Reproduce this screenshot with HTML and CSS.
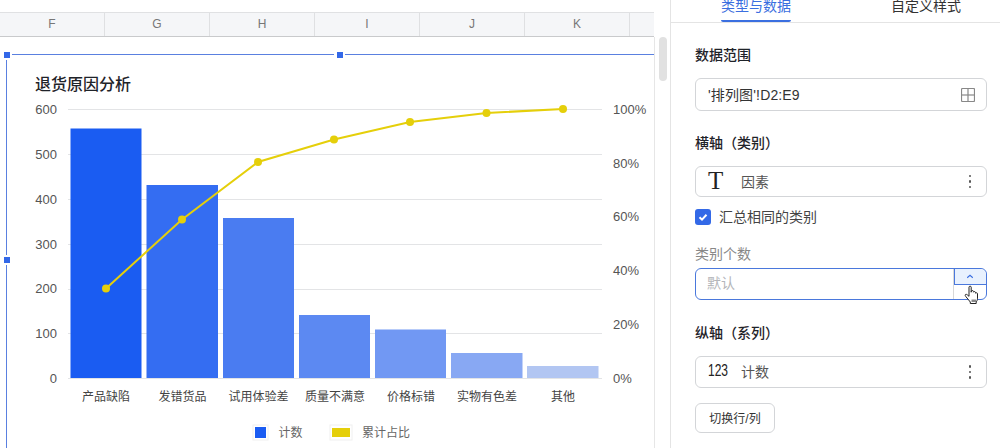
FILE: index.html
```html
<!DOCTYPE html>
<html lang="zh-CN">
<head>
    <meta charset="UTF-8">
    <title>退货原因分析</title>
    <link rel="stylesheet" href="styles.css">
</head>
<body>
<div class="app">
    <div class="sheet">
        <div class="top-strip"></div>
        <div class="col-row">
            <div class="col-cell">F</div>
            <div class="col-cell">G</div>
            <div class="col-cell">H</div>
            <div class="col-cell">I</div>
            <div class="col-cell">J</div>
            <div class="col-cell">K</div>
            <div class="col-cell col-rest"></div>
        </div>
        <div class="sheet-main">
            <!-- viewBox starts at y=37 so chart numbers read as page coordinates -->
            <svg class="chart" viewBox="0 37 654 411" width="654" height="411">
                <g class="grid">
                    <line x1="68" y1="109.5" x2="602" y2="109.5"/>
                    <line x1="68" y1="154.5" x2="602" y2="154.5"/>
                    <line x1="68" y1="199.5" x2="602" y2="199.5"/>
                    <line x1="68" y1="244.5" x2="602" y2="244.5"/>
                    <line x1="68" y1="289.5" x2="602" y2="289.5"/>
                    <line x1="68" y1="333.5" x2="602" y2="333.5"/>
                    <line x1="68" y1="378.5" x2="602" y2="378.5"/>
                </g>
                <text class="chart-title" x="35" y="90">退货原因分析</text>
                <g class="axis-left">
                    <text x="57" y="114">600</text>
                    <text x="57" y="159">500</text>
                    <text x="57" y="204">400</text>
                    <text x="57" y="249">300</text>
                    <text x="57" y="293">200</text>
                    <text x="57" y="338">100</text>
                    <text x="57" y="383">0</text>
                </g>
                <g class="axis-right">
                    <text x="613" y="114">100%</text>
                    <text x="613" y="168">80%</text>
                    <text x="613" y="221">60%</text>
                    <text x="613" y="275">40%</text>
                    <text x="613" y="329">20%</text>
                    <text x="613" y="383">0%</text>
                </g>
                <rect x="70.5" y="128.5" width="71" height="249.5" fill="#1a5cf2"/>
                <rect x="146.5" y="185" width="71.5" height="193" fill="#346df2"/>
                <rect x="223" y="218" width="71" height="160" fill="#4a7cf1"/>
                <rect x="299" y="315" width="71" height="63" fill="#5c89f2"/>
                <rect x="375" y="329.5" width="71" height="48.5" fill="#7198f3"/>
                <rect x="451" y="353" width="71.5" height="25" fill="#88a8f3"/>
                <rect x="527" y="366" width="71.5" height="12" fill="#b2c6f2"/>
                <polyline class="line" points="106,288.5 182,219.5 258,162 334,139.5 410,122 486.5,113 563,109"/>
                <g class="dots">
                    <circle cx="106" cy="288.5" r="4"/>
                    <circle cx="182" cy="219.5" r="4"/>
                    <circle cx="258" cy="162" r="4"/>
                    <circle cx="334" cy="139.5" r="4"/>
                    <circle cx="410" cy="122" r="4"/>
                    <circle cx="486.5" cy="113" r="4"/>
                    <circle cx="563" cy="109" r="4"/>
                </g>
                <g class="axis-bottom">
                    <text x="106" y="400.5">产品缺陷</text>
                    <text x="182.5" y="400.5">发错货品</text>
                    <text x="258.5" y="400.5">试用体验差</text>
                    <text x="335" y="400.5">质量不满意</text>
                    <text x="411" y="400.5">价格标错</text>
                    <text x="487" y="400.5">实物有色差</text>
                    <text x="563" y="400.5">其他</text>
                </g>
                <rect class="swatch-edge" x="253" y="425" width="15" height="15"/>
                <rect x="255" y="427" width="11" height="11" fill="#1a5cf2"/>
                <text class="legend" x="278.5" y="436.5">计数</text>
                <rect class="swatch-edge" x="330" y="425" width="22" height="15"/>
                <rect x="332" y="428" width="18" height="9" fill="#e5cf0a"/>
                <text class="legend" x="362" y="436.5">累计占比</text>
                <g class="frame">
                    <line x1="12" y1="54.5" x2="334" y2="54.5"/>
                    <line x1="345" y1="54.5" x2="654" y2="54.5"/>
                    <line x1="6.5" y1="60" x2="6.5" y2="255"/>
                    <line x1="6.5" y1="265" x2="6.5" y2="448"/>
                </g>
                <g class="handles">
                    <rect x="4" y="52" width="6" height="6"/>
                    <rect x="337" y="52" width="6" height="6"/>
                    <rect x="4" y="257" width="6" height="6"/>
                </g>
            </svg>
            <div class="scroll-track"><div class="scroll-thumb"></div></div>
        </div>
    </div>
    <div class="sidebar">
        <div class="tabs">
            <div class="tab selected">类型与数据</div>
            <div class="tab">自定义样式</div>
        </div>
        <div class="panel">
            <div class="heading">数据范围</div>
            <div class="field field-range">
                <span class="field-text">'排列图'!D2:E9</span>
                <svg class="grid-icon" viewBox="0 0 14 14" width="14" height="14">
                    <rect x="0.5" y="0.5" width="13" height="13" rx="1"/>
                    <line x1="0.5" y1="7" x2="13.5" y2="7"/>
                    <line x1="7" y1="0.5" x2="7" y2="13.5"/>
                </svg>
            </div>
            <div class="heading">横轴（类别）</div>
            <div class="field field-category">
                <span class="type-icon type-t">T</span>
                <span class="field-name">因素</span>
                <span class="more"><i></i><i></i><i></i></span>
            </div>
            <div class="check-row">
                <span class="checkbox">
                    <svg viewBox="0 0 16 16" width="16" height="16"><path d="M4.500 8.200 7 10.600 11.500 5.800"/></svg>
                </span>
                <span class="check-text">汇总相同的类别</span>
            </div>
            <div class="sub-label">类别个数</div>
            <div class="number-input">
                <span class="placeholder">默认</span>
                <div class="stepper">
                    <div class="step step-up">
                        <svg viewBox="0 0 10 6" width="8" height="5"><path d="M1.500 4.500 5 1.500 8.500 4.500"/></svg>
                    </div>
                    <div class="step"></div>
                </div>
                <svg class="cursor" viewBox="0 0 16 20" width="16" height="20">
                    <path d="M5 2.200c0-1.400 2.200-1.400 2.200 0v5l.2-1c.3-1.100 2-.9 2 .3l.1.7c.3-1 2-.8 2 .4l.1.6c.4-.8 1.900-.6 1.900.6v4.400c0 1.800-.6 2.800-1.300 3.800v1.500H6.300v-1.500L2.200 12c-.9-1-1.300-1.800-.8-2.400.6-.6 1.500-.2 2.200.5L5 11.300z"/>
                    <path class="cursor-mark" d="M7.500 14.500h4.500v2.500H7.500z"/>
                </svg>
            </div>
            <div class="heading heading-series">纵轴（系列）</div>
            <div class="field">
                <span class="type-icon"><span class="type-num">123</span></span>
                <span class="field-name">计数</span>
                <span class="more"><i></i><i></i><i></i></span>
            </div>
            <button class="switch-btn">切换行/列</button>
        </div>
    </div>
</div>
</body>
</html>
```

FILE: styles.css
```css
*{
    margin: 0;
    padding: 0;
    box-sizing: border-box;
}
body{
    font-family: "Liberation Sans", "Noto Sans CJK SC", sans-serif;
    background-color: #fff;
    overflow: hidden;
}
.app{
    display: flex;
    width: 1000px;
    height: 448px;
    overflow: hidden;
}
.sheet{
    width: 670px;
    display: flex;
    flex-direction: column;
}
.top-strip{
    height: 12px;
}
.col-row{
    width: 654px;
    height: 25px;
    display: flex;
    background-color: #f5f6f8;
    border-top: 1px solid #e0e1e3;
    border-bottom: 1px solid #c9cacc;
}
.col-cell{
    width: 105px;
    line-height: 23px;
    text-align: center;
    font-size: 12px;
    color: #777;
    border-right: 1px solid #dfe0e2;
}
.col-rest{
    width: 24px;
    border-right: none;
}
.sheet-main{
    flex: 1;
    display: flex;
}
.chart{
    display: block;
    flex: none;
    font-size: 13px;
}
.grid line{
    stroke: #e3e4e6;
    stroke-width: 1;
}
.chart-title{
    font-size: 16px;
    font-weight: 500;
    fill: #1f2329;
}
.axis-left text{
    text-anchor: end;
    fill: #555;
}
.axis-right text{
    fill: #555;
}
.axis-bottom text{
    font-size: 12px;
    text-anchor: middle;
    fill: #444;
}
.legend{
    font-size: 12px;
    fill: #666;
}
.swatch-edge{
    fill: #fff;
    stroke: #f0f0f0;
    stroke-width: 1;
}
.line{
    fill: none;
    stroke: #e5cf0a;
    stroke-width: 2;
}
.dots circle{
    fill: #e5cf0a;
}
.frame line{
    stroke: #5a80e0;
    stroke-width: 1;
}
.handles rect{
    fill: #3368e8;
}
.scroll-track{
    flex: 1;
    border-left: 1px solid #e6e6e6;
    padding: 0 3px 0 4px;
}
.scroll-thumb{
    width: 8px;
    height: 44px;
    background-color: #e1e1e1;
    border-radius: 4px;
}
.sidebar{
    width: 330px;
    border-left: 1px solid #e4e4e4;
}
.tabs{
    height: 23px;
    display: flex;
    border-bottom: 1px solid #e4e4e4;
    font-size: 14px;
    color: #333;
}
.tab{
    height: 22px;
    line-height: 12px;
    margin-left: 50px;
    width: 70px;
    text-align: center;
    white-space: nowrap;
}
.tab + .tab{
    margin-left: 100px;
}
.tab.selected{
    color: #3b6fe0;
    border-bottom: 2px solid #3b6fe0;
    border-radius: 0 0 2px 2px;
}
.panel{
    padding: 0 13px 0 24px;
    font-size: 14px;
    color: #2b2f36;
}
.heading{
    margin-top: 22px;
    margin-bottom: 13px;
    line-height: 20px;
    font-weight: 500;
    color: #1f2329;
}
.heading-series{
    margin-top: 23px;
}
.field{
    height: 32px;
    display: flex;
    align-items: center;
    padding: 0 14px 2px 12px;
    border: 1px solid #d3d5d8;
    border-radius: 6px;
    background-color: #fff;
}
.field-range{
    height: 33px;
    justify-content: space-between;
    padding-right: 11px;
}
.field-category{
    height: 31px;
}
.field-text{
    color: #333;
    letter-spacing: 0.15px;
}
.grid-icon{
    margin-top: 2px;
}
.grid-icon rect,
.grid-icon line{
    fill: none;
    stroke: #888;
    stroke-width: 1.200;
}
.type-icon{
    width: 33px;
    color: #222;
}
.type-t{
    font-family: "Liberation Serif", serif;
    font-size: 25px;
    line-height: 1;
}
.type-num{
    display: inline-block;
    font-size: 16px;
    transform: scaleX(0.75);
    transform-origin: left center;
}
.field-name{
    flex: 1;
    color: #555;
}
.more{
    display: flex;
    flex-direction: column;
    gap: 3px;
    margin-top: 2px;
    margin-right: 1px;
}
.more i{
    display: block;
    width: 2.500px;
    height: 2.500px;
    border-radius: 50%;
    background-color: #555;
}
.check-row{
    margin-top: 12px;
    display: flex;
    align-items: center;
    gap: 8px;
    height: 16px;
    color: #444;
}
.check-text{
    padding-bottom: 2px;
}
.checkbox{
    width: 16px;
    height: 16px;
    background-color: #3369e7;
    border-radius: 3px;
}
.checkbox svg{
    display: block;
}
.checkbox path{
    fill: none;
    stroke: #fff;
    stroke-width: 2;
}
.sub-label{
    margin-top: 19px;
    margin-bottom: 4px;
    line-height: 20px;
    color: #888;
}
.number-input{
    position: relative;
    height: 32px;
    display: flex;
    justify-content: space-between;
    border: 1px solid #4a78dc;
    border-radius: 6px;
    padding-left: 11px;
}
.placeholder{
    line-height: 29px;
    color: #b4b6ba;
}
.stepper{
    width: 33px;
    display: flex;
    flex-direction: column;
    border-left: 1px solid #d8d8d8;
    border-radius: 0 6px 6px 0;
    overflow: hidden;
}
.step{
    flex: 1;
}
.step-up{
    height: 16px;
    flex: none;
    display: flex;
    align-items: center;
    justify-content: center;
    background-color: #e8f1fe;
    border-bottom: 1px solid #4a78dc;
    box-shadow: inset 1px 0 0 #4a78dc;
}
.step-up path{
    fill: none;
    stroke: #3b6fe0;
    stroke-width: 1.400;
}
.cursor{
    position: absolute;
    left: 268px;
    top: 16px;
}
.cursor path{
    fill: #fff;
    stroke: #222;
    stroke-width: 1;
}
.cursor .cursor-mark{
    fill: #888;
    stroke: none;
}
.switch-btn{
    display: block;
    width: 80px;
    height: 30px;
    margin-top: 15px;
    padding-bottom: 2px;
    border: 1px solid #d3d5d8;
    border-radius: 6px;
    background-color: #fff;
    font-family: inherit;
    font-size: 12px;
    color: #333;
}
```
